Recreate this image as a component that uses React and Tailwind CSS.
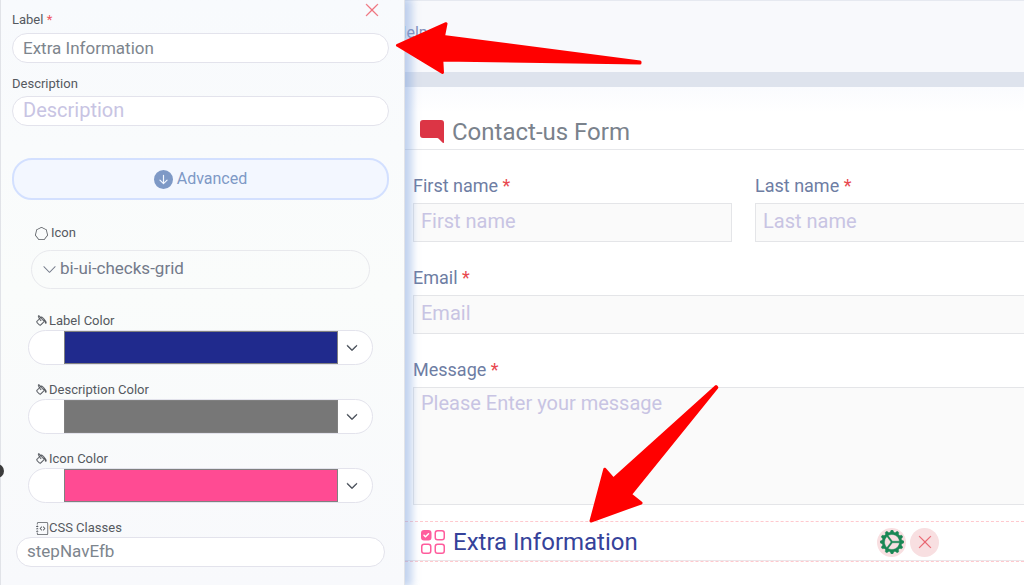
// src/App.jsx

import React, { useState } from "react";
import {
  BsArrowDownCircleFill,
  BsChatRightFill,
  BsChevronDown,
  BsGearWideConnected,
  BsHeptagon,
  BsJournalCode,
  BsPaintBucket,
  BsUiChecksGrid,
  BsXLg,
} from "react-icons/bs";

const COLORS = [
  { id: "label-color", label: "Label Color", value: "#202a8d" },
  { id: "description-color", label: "Description Color", value: "#777777" },
  { id: "icon-color", label: "Icon Color", value: "#ff4b93" },
];

function ColorField({ id, label, value }) {
  const [color, setColor] = useState(value);

  return (
    <div className="mt-4 ml-4 mr-4">
      <label htmlFor={id} className="ml-2 flex h-[18px] items-center text-[13px] text-[#55595f]">
        <BsPaintBucket className="mr-px size-3" strokeWidth="0.4" />
        {label}
      </label>
      <div className="flex h-[35px] rounded-full border border-[#e3e3ec] bg-white pl-[35px]">
        <input
          id={id}
          type="color"
          value={color}
          onChange={e => setColor(e.target.value)}
          className="h-full min-w-0 flex-1 appearance-none bg-transparent p-0 [&::-webkit-color-swatch-wrapper]:p-0 [&::-webkit-color-swatch]:border [&::-webkit-color-swatch]:border-[#808080]"
        />
        <button type="button" aria-label={`Choose ${label}`} className="flex w-[34px] items-center pl-2 text-[#3f4650]">
          <BsChevronDown className="size-3" strokeWidth="1" />
        </button>
      </div>
    </div>
  );
}

function FormField({ id, label, type = "text", placeholder = label }) {
  return (
    <div>
      <label htmlFor={id} className="block h-9 text-lg leading-[38px] text-[#6e7da3]">
        {label} <span className="text-[#e8484f]">*</span>
      </label>
      {type === "textarea" ? (
        <textarea
          id={id}
          placeholder={placeholder}
          className="block h-[118px] w-full resize-none border border-[#e4e5e8] bg-[#fafafa] px-[7px] py-px text-xl placeholder:text-[#c8c4e3]"
        />
      ) : (
        <input
          id={id}
          type={type}
          placeholder={placeholder}
          className="block h-[39px] w-full border border-[#e4e5e8] bg-[#fafafa] px-[7px] pb-[3px] text-xl placeholder:text-[#c8c4e3]"
        />
      )}
    </div>
  );
}

function Settings() {
  return (
    <aside className="relative z-10 w-[405px] shrink-0 border-x border-[#e1e3e8] bg-linear-to-b from-[#f8fafd] via-[#fafcfb] to-[#f8f9fc] pl-[11px] pr-[15px] pt-[11px] shadow-[5px_0_8px_2px_rgba(120,157,220,0.45)]">
      <div className="flex justify-between">
        <label htmlFor="label" className="h-[22px] text-[13px] leading-[18px] text-[#55595f]">
          Label <span className="text-[#ee5560]">*</span>
        </label>
        <button type="button" aria-label="Close" className="-mt-[9px] mr-[9px] size-4 text-[#ee6b76]">
          <BsXLg className="size-4" strokeWidth="0.3" />
        </button>
      </div>
      <input
        id="label"
        type="text"
        defaultValue="Extra Information"
        className="block h-[30px] w-full rounded-full border border-[#e3e3ec] bg-white px-[10px] text-[17px] text-[#7d858d]"
      />

      <label htmlFor="description" className="mt-3 block h-[21px] text-[13px] leading-[18px] text-[#55595f]">
        Description
      </label>
      <input
        id="description"
        type="text"
        placeholder="Description"
        className="block h-[30px] w-full rounded-full border border-[#e3e3ec] bg-white px-[10px] pb-[2px] text-xl placeholder:text-[#c8c4e3]"
      />

      <button
        type="button"
        className="mt-8 flex h-[42px] w-full items-center justify-center gap-1 rounded-[20px] border-2 border-[#d3e0ff] bg-[#f3f7ff] text-base text-[#7e99c6]"
      >
        <BsArrowDownCircleFill className="size-[19px]" />
        Advanced
      </button>

      <div className="mt-6 ml-[19px] mr-[19px]">
        <label htmlFor="icon" className="ml-1 flex h-[18px] items-center gap-[3px] text-[13px] text-[#55595f]">
          <BsHeptagon className="size-[13px]" />
          Icon
        </label>
        <div className="mt-2 flex h-[39px] items-center gap-[3px] rounded-full border border-[#e8e9ed] pl-[10px] text-[#737a8a]">
          <BsChevronDown className="size-[15px] shrink-0" />
          <select id="icon" className="h-full min-w-0 flex-1 appearance-none bg-transparent pb-[2px] text-[17px]">
            <option>bi-ui-checks-grid</option>
          </select>
        </div>
      </div>

      <div className="mt-[23px]">
        {COLORS.map(c => (
          <ColorField key={c.id} {...c} />
        ))}
      </div>

      <div className="mt-4 ml-1 mr-1">
        <label htmlFor="css-classes" className="ml-5 flex h-[18px] items-center text-[13px] text-[#55595f]">
          <BsJournalCode className="size-[13px]" />
          CSS Classes
        </label>
        <input
          id="css-classes"
          type="text"
          defaultValue="stepNavEfb"
          className="block h-[30px] w-full rounded-full border border-[#e3e3ec] bg-white px-[10px] pb-[2px] text-[17px] text-[#7d858d]"
        />
      </div>
    </aside>
  );
}

function FormPreview() {
  return (
    <main className="min-w-0 flex-1">
      <header className="h-[72px] border-t border-[#e6e9f0] bg-[#f8f9fc] pt-5">
        <a href="#help" className="-ml-[10px] text-base text-[#8490bb]">Help</a>
      </header>
      <div className="h-[15px] bg-[#dee3ed]" />

      <section className="bg-linear-to-b from-[#fafbfe] to-white to-40%">
        <h1 className="flex h-[63px] items-end gap-2 border-b border-[#e6e7ea] pb-px pl-[15px] text-2xl text-[#7a828c]">
          <BsChatRightFill className="mb-1 size-6 text-[#dc3545]" />
          Contact-us Form
        </h1>
      </section>

      {/* the form runs on past the right edge of the window */}
      <form className="-mr-[50px] grid grid-cols-2 gap-x-[23px] gap-y-[17px] pl-2 pt-[17px]">
        <FormField id="first-name" label="First name" />
        <FormField id="last-name" label="Last name" />
        <div className="col-span-2">
          <FormField id="email" label="Email" type="email" />
        </div>
        <div className="col-span-2">
          <FormField id="message" label="Message" type="textarea" placeholder="Please Enter your message" />
        </div>
      </form>

      <section className="mt-4 border-t border-b border-dashed border-t-[#ffc9ce] border-b-[#ffc9ce]">
        <div className="flex h-[39px] items-center gap-2 border-b border-solid border-b-[#ebe6e9] pl-4 pr-[85px] pt-[2px]">
          <BsUiChecksGrid className="size-6 text-[#ff5c9d]" />
          <h2 className="flex-1 text-2xl text-[#35429a]">Extra Information</h2>
          <button type="button" aria-label="Settings" className="flex size-[29px] items-center justify-center rounded-full bg-[#f8dfe1] text-[#198754]">
            <BsGearWideConnected className="size-6" strokeWidth="0.3" />
          </button>
          <button type="button" aria-label="Delete" className="-ml-1 flex size-[29px] items-center justify-center rounded-full bg-[#f8dfe1] text-[#e8606c]">
            <BsXLg className="size-4" strokeWidth="0.2" />
          </button>
        </div>
      </section>
    </main>
  );
}

export default function App() {
  return (
    <div className="relative flex min-h-screen overflow-hidden bg-white font-[Roboto,sans-serif]">
      <Settings />
      <FormPreview />

      <span className="absolute -left-[10px] top-[464px] z-20 size-[14px] rounded-full bg-[#3c3c3c]" />

      {/* pointer arrows */}
      <svg
        className="pointer-events-none absolute left-0 top-0 z-20"
        width="1024"
        height="585"
        fill="#ff0000"
        stroke="#ff0000"
        strokeWidth="3"
        strokeLinejoin="round"
        aria-hidden="true"
      >
        <path d="M397.5 45.3 446 23.7 443.5 36.5 640 62 640 63 441.8 60 442.5 72.5Z" />
        <path d="M591 521 604.8 469.2 613.3 479 716 386.5 716.8 387.5 630.3 494.5 641 503Z" />
      </svg>
    </div>
  );
}
